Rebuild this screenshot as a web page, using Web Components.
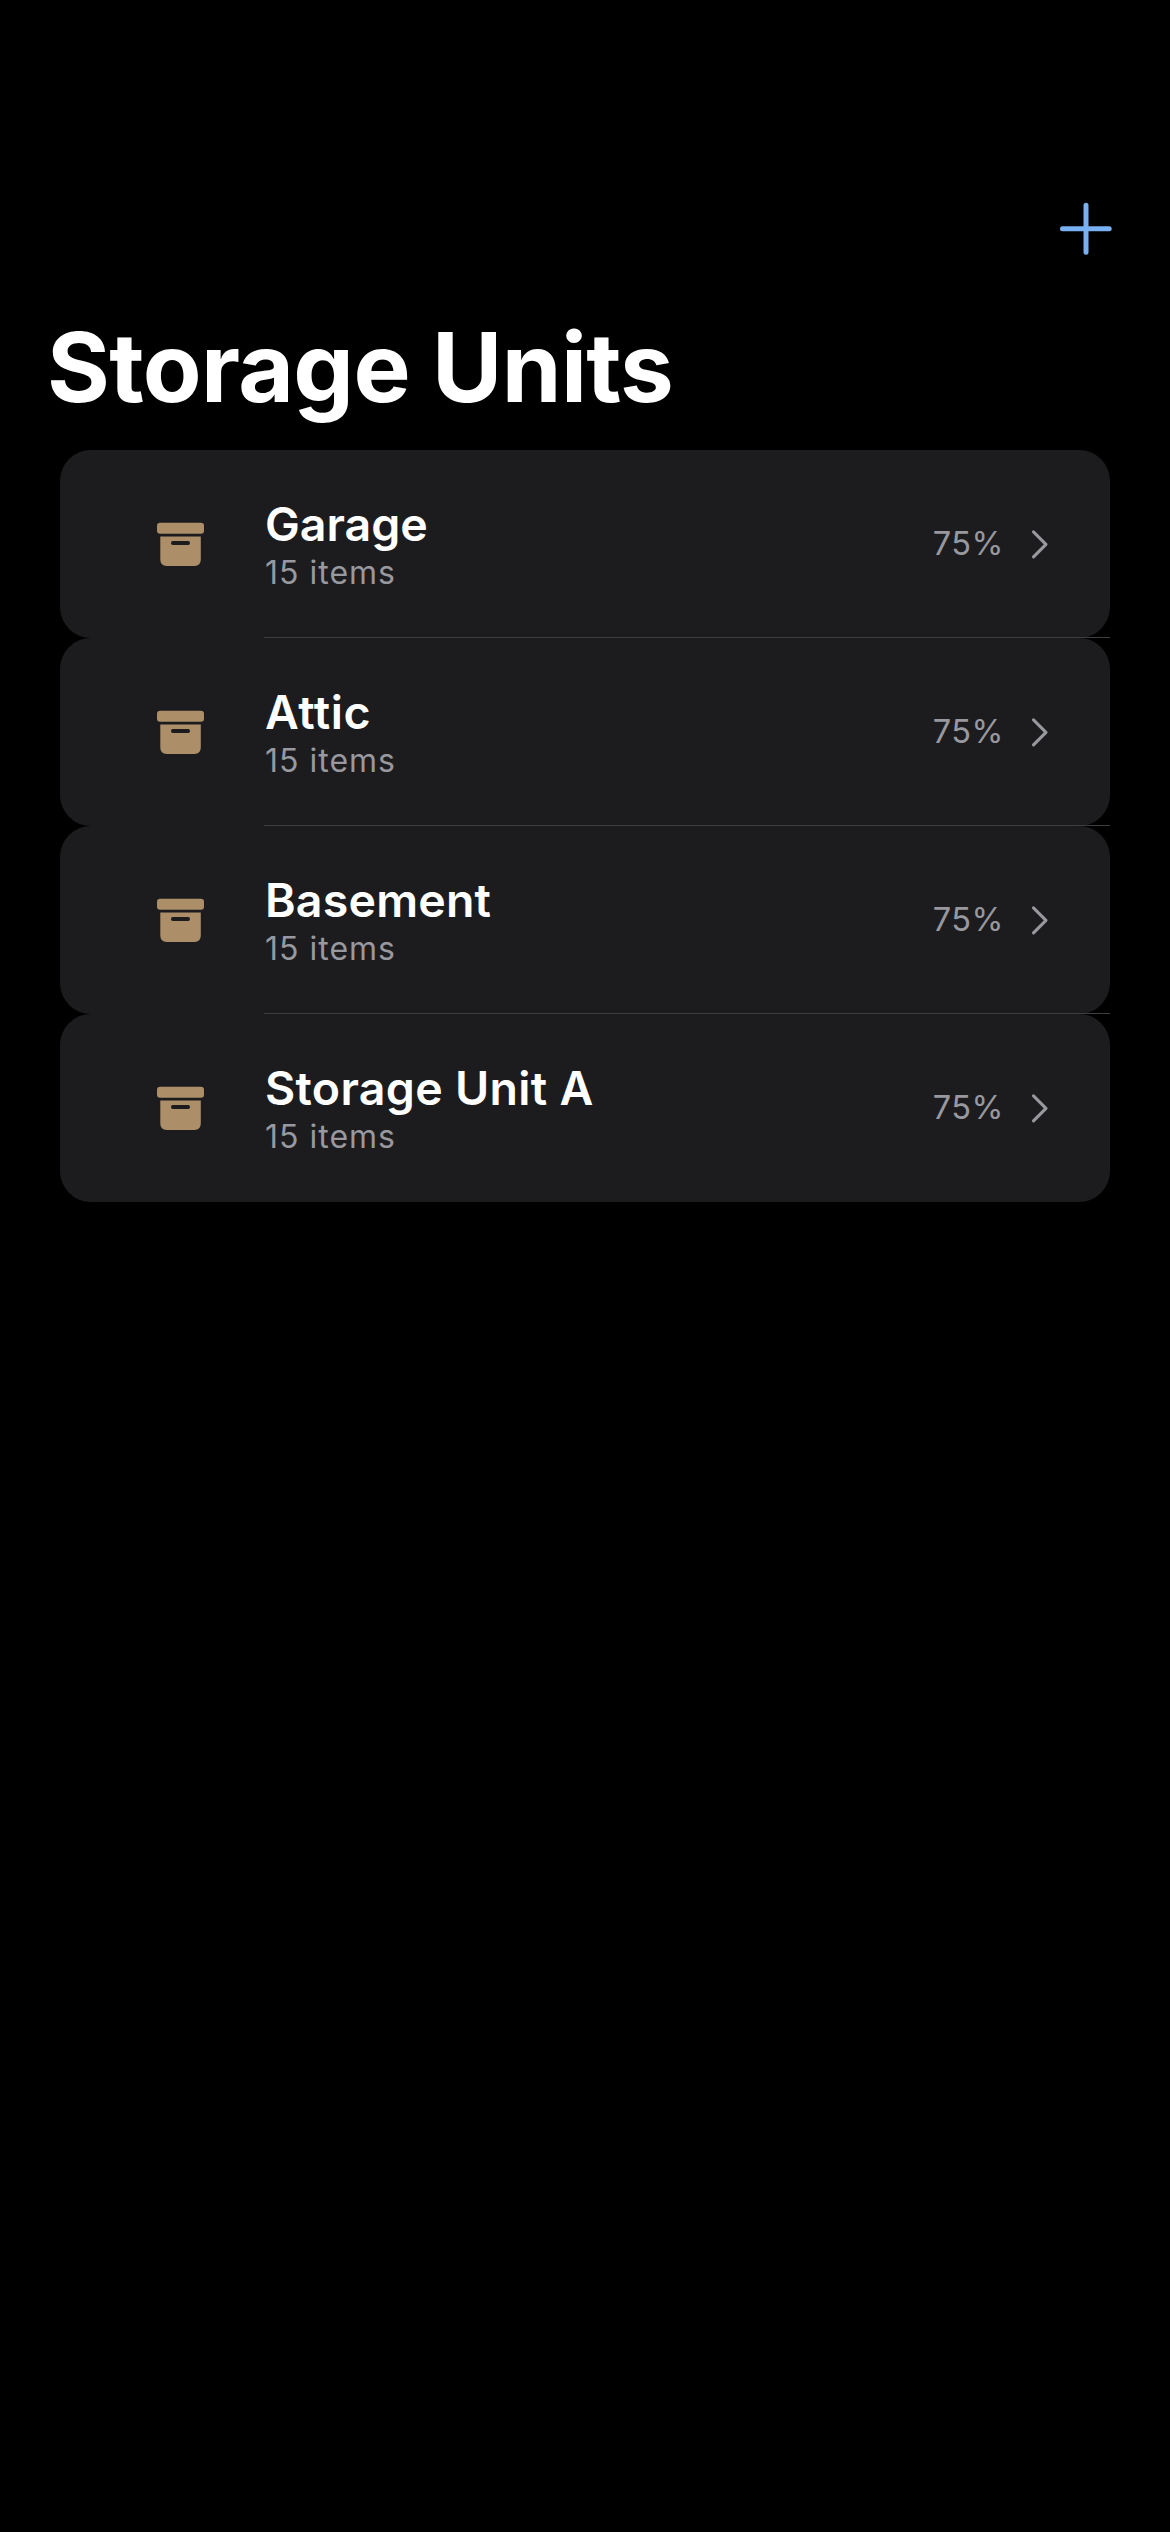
<!DOCTYPE html>
<html lang="en">
<head>
<meta charset="utf-8">
<title>Storage Units</title>
<style>
  html, body { margin: 0; background: #000; }
  body { font-family: Inter, "Liberation Sans", sans-serif; color: #fff; }
</style>
</head>
<body>
<storage-screen>
  <nav-bar slot="bar"></nav-bar>
  <large-title slot="title">Storage Units</large-title>
  <unit-row percent="75%" items="15 items">Garage</unit-row>
  <unit-row percent="75%" items="15 items" style="--tracking:.55px">Attic</unit-row>
  <unit-row percent="75%" items="15 items" style="--tracking:.2px">Basement</unit-row>
  <unit-row percent="75%" items="15 items" style="--tracking:.3px">Storage Unit A</unit-row>
</storage-screen>

<script>
const define = (name, html, setup) => {
  const template = document.createElement('template');
  template.innerHTML = html;
  customElements.define(name, class extends HTMLElement {
    connectedCallback() {
      if (this.shadowRoot) return;
      const root = this.attachShadow({ mode: 'open' });
      root.append(template.content.cloneNode(true));
      if (setup) setup(this, root);
    }
  });
};

define('plus-icon', `
  <style>:host { display: block; width: 54px; height: 54px; } svg { display: block; }</style>
  <svg width="54" height="54" viewBox="0 0 54 54" fill="none" stroke="#78b0f1" stroke-width="5" stroke-linecap="round">
    <path d="M27 3.2V50.2M3.5 26.7H50.2"/>
  </svg>`);

define('box-icon', `
  <style>:host { display: block; width: 48px; height: 44px; } svg { display: block; }</style>
  <svg width="48" height="44" viewBox="0 0 48 44" fill="#ac8e68">
    <rect x="0" y="0.8" width="47" height="11" rx="3"/>
    <path fill-rule="evenodd" d="M3.3 14.5H43.8V37.5Q43.8 44 37.5 44H9.6Q3.3 44 3.3 37.5ZM15.8 18.9Q14 18.9 14 20.9Q14 23 15.8 23H31.2Q33 23 33 20.9Q33 18.9 31.2 18.9Z"/>
  </svg>`);

define('chevron-icon', `
  <style>:host { display: block; width: 18px; height: 30px; } svg { display: block; }</style>
  <svg width="18" height="30" viewBox="0 0 18 30" fill="none" stroke="#98989f" stroke-width="3.1" stroke-linecap="round" stroke-linejoin="round">
    <path d="M2.5 2.8L15 15.3L2.5 27.8"/>
  </svg>`);

define('nav-bar', `
  <style>
    :host { display: flex; justify-content: flex-end; align-items: center; height: 54px; padding: 202px 57px 0 0; }
  </style>
  <plus-icon></plus-icon>`);

define('large-title', `
  <style>
    :host { display: block; padding: 53px 0 0 47px; }
    h1 { margin: 0; font-size: 96px; font-weight: 700; line-height: 116px; letter-spacing: -.62px; white-space: nowrap; }
  </style>
  <h1><slot></slot></h1>`);

define('unit-row', `
  <style>
    :host { display: block; height: 188px; }
    .card { display: flex; align-items: center; box-sizing: border-box; height: 188px; padding: 0 61px 1px 97px; background: #1c1c1e; border-radius: 31px; }
    .text { flex: 1; margin-left: 60px; }
    .name { font-size: 46.5px; font-weight: 600; line-height: 56px; letter-spacing: var(--tracking, 0px); white-space: nowrap; }
    .items, .percent { font-size: 32px; line-height: 40px; letter-spacing: 1px; color: #98989f; white-space: nowrap; }
    .items { padding-top: 1px; margin-bottom: -1px; }
    .percent { margin-right: 27px; font-size: 32.5px; letter-spacing: .5px; }
    .line { height: 1px; margin: -1px 0 0 204px; background: #3d3d41; }
    :host(:last-of-type) .line { display: none; }
  </style>
  <div class="card">
    <box-icon></box-icon>
    <div class="text">
      <div class="name"><slot></slot></div>
      <div class="items"></div>
    </div>
    <div class="percent"></div>
    <chevron-icon></chevron-icon>
  </div>
  <div class="line"></div>`,
  (host, root) => {
    root.querySelector('.items').textContent = host.getAttribute('items');
    root.querySelector('.percent').textContent = host.getAttribute('percent');
  });

define('storage-screen', `
  <style>
    :host { display: flex; flex-direction: column; box-sizing: border-box; width: 1170px; height: 2532px; background: #000; overflow: hidden; }
    .list { padding: 25px 60px 0; }
  </style>
  <slot name="bar"></slot>
  <slot name="title"></slot>
  <div class="list"><slot></slot></div>`);
</script>
</body>
</html>
